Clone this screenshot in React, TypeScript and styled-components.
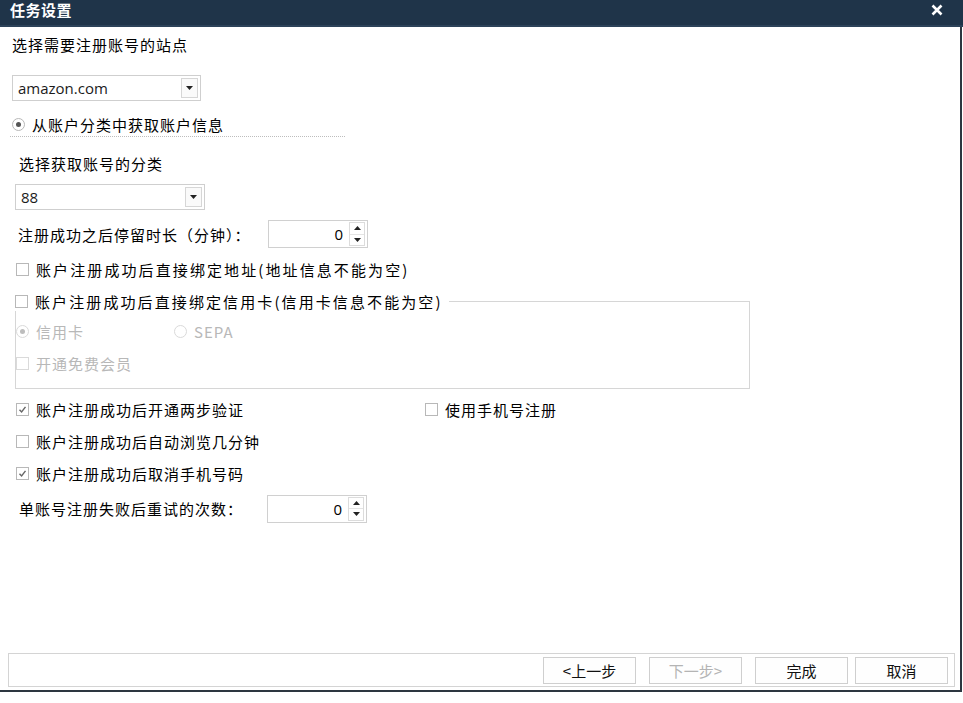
import React, { useState } from 'react';
import styled, { createGlobalStyle } from 'styled-components';

const GlobalStyle = createGlobalStyle`
    html, body {
        margin: 0;
        padding: 0;
        background: #ffffff;
    }
    body {
        font-family: "Noto Sans CJK SC", "Noto Sans", sans-serif;
        font-size: 15px;
        color: #000;
    }
`;

const Window = styled.div`
    width: 963px;
    height: 703px;
    display: flex;
    flex-direction: column;
    background: #fff;
    overflow: hidden;
`;

const TitleBar = styled.div`
    height: 25px;
    flex: 0 0 25px;
    background: #1f3449;
    border-bottom: 2px solid #2c4259;
    display: flex;
    align-items: center;
    justify-content: space-between;
    padding: 0 18px 0 10px;
`;

const Title = styled.span`
    color: #fff;
    font-size: 15px;
    font-weight: bold;
    line-height: 1;
    margin-top: -7px;
    letter-spacing: 0.5px;
`;

const CloseBtn = styled.button`
    border: 0;
    background: transparent;
    padding: 0;
    width: 14px;
    height: 14px;
    margin-top: -4px;
    display: flex;
    cursor: pointer;
`;

const Body = styled.div`
    flex: 0 0 663px;
    display: flex;
    flex-direction: column;
    border-right: 2px solid #2d3640;
    border-bottom: 2px solid #2d3640;
    margin-right: 1px;
`;

const Content = styled.div`
    flex: 1;
    display: flex;
    flex-direction: column;
    padding-left: 12px;
`;

const Label = styled.div<{ $top: number; $left?: number }>`
    height: 20px;
    line-height: 20px;
    margin-top: ${(p) => p.$top}px;
    margin-left: ${(p) => p.$left || 0}px;
    letter-spacing: 1px;
    white-space: nowrap;
`;

const FieldLabel = styled.span<{ $width: number }>`
    width: ${(p) => p.$width}px;
    flex: 0 0 ${(p) => p.$width}px;
    letter-spacing: 1px;
`;

const Select = styled.div<{ $top: number; $left?: number; $width: number }>`
    width: ${(p) => p.$width}px;
    height: 26px;
    box-sizing: border-box;
    margin-top: ${(p) => p.$top}px;
    margin-left: ${(p) => p.$left || 0}px;
    border: 1px solid #cfcfcf;
    display: flex;
    align-items: center;
    padding: 0 2px 0 5px;
    font-family: "Open Sans", "Liberation Sans", sans-serif;
    font-size: 15px;
    background: #fff;
`;

const SelectText = styled.span`
    flex: 1;
    color: #1b1b1b;
`;

const DropBtn = styled.span`
    width: 15px;
    height: 18px;
    border: 1px solid #d6d6d6;
    display: flex;
    align-items: center;
    justify-content: center;
    background: #fafafa;
`;

const Row = styled.div<{ $top: number; $left?: number; $height?: number }>`
    display: flex;
    align-items: center;
    height: ${(p) => p.$height || 20}px;
    margin-top: ${(p) => p.$top}px;
    margin-left: ${(p) => p.$left || 0}px;
    white-space: nowrap;
`;

const Dotted = styled.div`
    width: 335px;
    margin-top: 2px;
    margin-left: -2px;
    border-top: 1px dotted #bdbdbd;
`;

const Option = styled.label<{ $disabled?: boolean; $width?: number; $spacing?: number }>`
    display: flex;
    align-items: center;
    gap: 7px;
    letter-spacing: ${(p) => p.$spacing ?? 1}px;
    color: ${(p) => (p.$disabled ? '#b8b8b8' : '#000')};
    width: ${(p) => (p.$width ? `${p.$width}px` : 'auto')};
    cursor: default;
`;

const Box = styled.span<{ $disabled?: boolean }>`
    width: 13px;
    height: 13px;
    box-sizing: border-box;
    border: 1px solid ${(p) => (p.$disabled ? '#dadada' : '#b8b8b8')};
    background: #fff;
    display: flex;
    align-items: center;
    justify-content: center;
    flex: 0 0 13px;
`;

const Round = styled.span<{ $disabled?: boolean }>`
    width: 13px;
    height: 13px;
    box-sizing: border-box;
    border-radius: 50%;
    border: 1px solid ${(p) => (p.$disabled ? '#dadada' : '#b8b8b8')};
    background: #fff;
    display: flex;
    align-items: center;
    justify-content: center;
    flex: 0 0 13px;
`;

const Dot = styled.span<{ $disabled?: boolean }>`
    width: 5px;
    height: 5px;
    border-radius: 50%;
    background: ${(p) => (p.$disabled ? '#bdbdbd' : '#555')};
`;

const Spin = styled.div`
    width: 100px;
    height: 28px;
    box-sizing: border-box;
    border: 1px solid #d0d0d0;
    display: flex;
    align-items: center;
    font-family: "Open Sans", "Liberation Sans", sans-serif;
    font-size: 15px;
`;

const SpinValue = styled.span`
    flex: 1;
    text-align: right;
    padding-right: 6px;
`;

const SpinBtns = styled.div`
    width: 14px;
    height: 22px;
    margin-right: 2px;
    border: 1px solid #dcdcdc;
    display: flex;
    flex-direction: column;
`;

const SpinHalf = styled.span<{ $up?: boolean }>`
    flex: 1;
    display: flex;
    align-items: center;
    justify-content: center;
    border-bottom: ${(p) => (p.$up ? '1px solid #e4e4e4' : '0')};
`;

const Group = styled.fieldset`
    width: 735px;
    height: 98px;
    box-sizing: border-box;
    margin: 12px 0 0 3px;
    padding: 0;
    border: 1px solid #d6d6d6;
    display: flex;
    flex-direction: column;
`;

const Legend = styled.legend`
    padding: 0 6px 0 0;
    margin-left: -1px;
    height: 20px;
    display: flex;
    align-items: center;
`;

const Footer = styled.div`
    margin: 0 5px 3px 8px;
    height: 34px;
    box-sizing: border-box;
    border: 1px solid #d4d4d4;
    display: flex;
    align-items: center;
    justify-content: flex-end;
    gap: 7px;
    padding-right: 6px;
`;

const Button = styled.button<{ $gapRight?: number }>`
    width: 93px;
    height: 27px;
    border: 1px solid #cfcfcf;
    background: #fefefe;
    font-family: "Noto Sans CJK SC", "Noto Sans", sans-serif;
    font-size: 15px;
    color: #111;
    padding: 0;
    margin-right: ${(p) => p.$gapRight || 0}px;
    &:disabled {
        color: #b4b4b4;
    }
`;

const Below = styled.div`
    flex: 1;
    background: #fff;
`;

function Caret({ up }: { up?: boolean }) {
    return (
        <svg width="7" height="4" viewBox="0 0 7 4">
            <path d={up ? 'M0 4 L3.5 0 L7 4 Z' : 'M0 0 L7 0 L3.5 4 Z'} fill="#222" />
        </svg>
    );
}

function Check(props: { label: string; checked?: boolean; disabled?: boolean; width?: number; spacing?: number }) {
    const [on, setOn] = useState(!!props.checked);
    return (
        <Option
            $disabled={props.disabled}
            $width={props.width}
            $spacing={props.spacing}
            onClick={() => !props.disabled && setOn(!on)}
        >
            <Box $disabled={props.disabled}>
                {on && (
                    <svg width="9" height="9" viewBox="0 0 9 9">
                        <path d="M1.5 4.8 L3.6 7 L7.5 1.8" stroke="#666" strokeWidth="1.4" fill="none" />
                    </svg>
                )}
            </Box>
            <span>{props.label}</span>
        </Option>
    );
}

function Radio(props: { label: string; checked?: boolean; disabled?: boolean; width?: number }) {
    return (
        <Option $disabled={props.disabled} $width={props.width}>
            <Round $disabled={props.disabled}>{props.checked && <Dot $disabled={props.disabled} />}</Round>
            <span>{props.label}</span>
        </Option>
    );
}

function SpinBox(props: { value: string }) {
    return (
        <Spin>
            <SpinValue>{props.value}</SpinValue>
            <SpinBtns>
                <SpinHalf $up>
                    <Caret up />
                </SpinHalf>
                <SpinHalf>
                    <Caret />
                </SpinHalf>
            </SpinBtns>
        </Spin>
    );
}

export default function App() {
    return (
        <>
            <GlobalStyle />
            <Window>
                <TitleBar>
                    <Title>任务设置</Title>
                    <CloseBtn>
                        <svg width="12" height="12" viewBox="0 0 12 12">
                            <path d="M1.5 1.5 L10.5 10.5 M10.5 1.5 L1.5 10.5" stroke="#fff" strokeWidth="2.6" />
                        </svg>
                    </CloseBtn>
                </TitleBar>
                <Body>
                    <Content>
                        <Label $top={8}>选择需要注册账号的站点</Label>
                        <Select $top={20} $width={189}>
                            <SelectText>amazon.com</SelectText>
                            <DropBtn>
                                <Caret />
                            </DropBtn>
                        </Select>
                        <Row $top={13}>
                            <Radio label="从账户分类中获取账户信息" checked />
                        </Row>
                        <Dotted />
                        <Label $top={17} $left={7}>选择获取账号的分类</Label>
                        <Select $top={10} $left={3} $width={190}>
                            <SelectText>88</SelectText>
                            <DropBtn>
                                <Caret />
                            </DropBtn>
                        </Select>
                        <Row $top={10} $left={6} $height={28}>
                            <FieldLabel $width={250}>注册成功之后停留时长（分钟）：</FieldLabel>
                            <SpinBox value="0" />
                        </Row>
                        <Row $top={11} $left={4}>
                            <Check label="账户注册成功后直接绑定地址(地址信息不能为空)" spacing={2.1} />
                        </Row>
                        <Group>
                            <Legend>
                                <Check label="账户注册成功后直接绑定信用卡(信用卡信息不能为空)" spacing={2.1} />
                            </Legend>
                            <Row $top={10}>
                                <Radio label="信用卡" checked disabled width={158} />
                                <Radio label="SEPA" disabled />
                            </Row>
                            <Row $top={12}>
                                <Check label="开通免费会员" disabled />
                            </Row>
                        </Group>
                        <Row $top={10} $left={4}>
                            <Check label="账户注册成功后开通两步验证" checked width={409} />
                            <Check label="使用手机号注册" />
                        </Row>
                        <Row $top={12} $left={4}>
                            <Check label="账户注册成功后自动浏览几分钟" />
                        </Row>
                        <Row $top={12} $left={4}>
                            <Check label="账户注册成功后取消手机号码" checked />
                        </Row>
                        <Row $top={12} $left={7} $height={27}>
                            <FieldLabel $width={248}>单账号注册失败后重试的次数：</FieldLabel>
                            <SpinBox value="0" />
                        </Row>
                    </Content>
                    <Footer>
                        <Button $gapRight={6}>&lt;上一步</Button>
                        <Button disabled $gapRight={6}>下一步&gt;</Button>
                        <Button>完成</Button>
                        <Button>取消</Button>
                    </Footer>
                </Body>
                <Below />
            </Window>
        </>
    );
}
